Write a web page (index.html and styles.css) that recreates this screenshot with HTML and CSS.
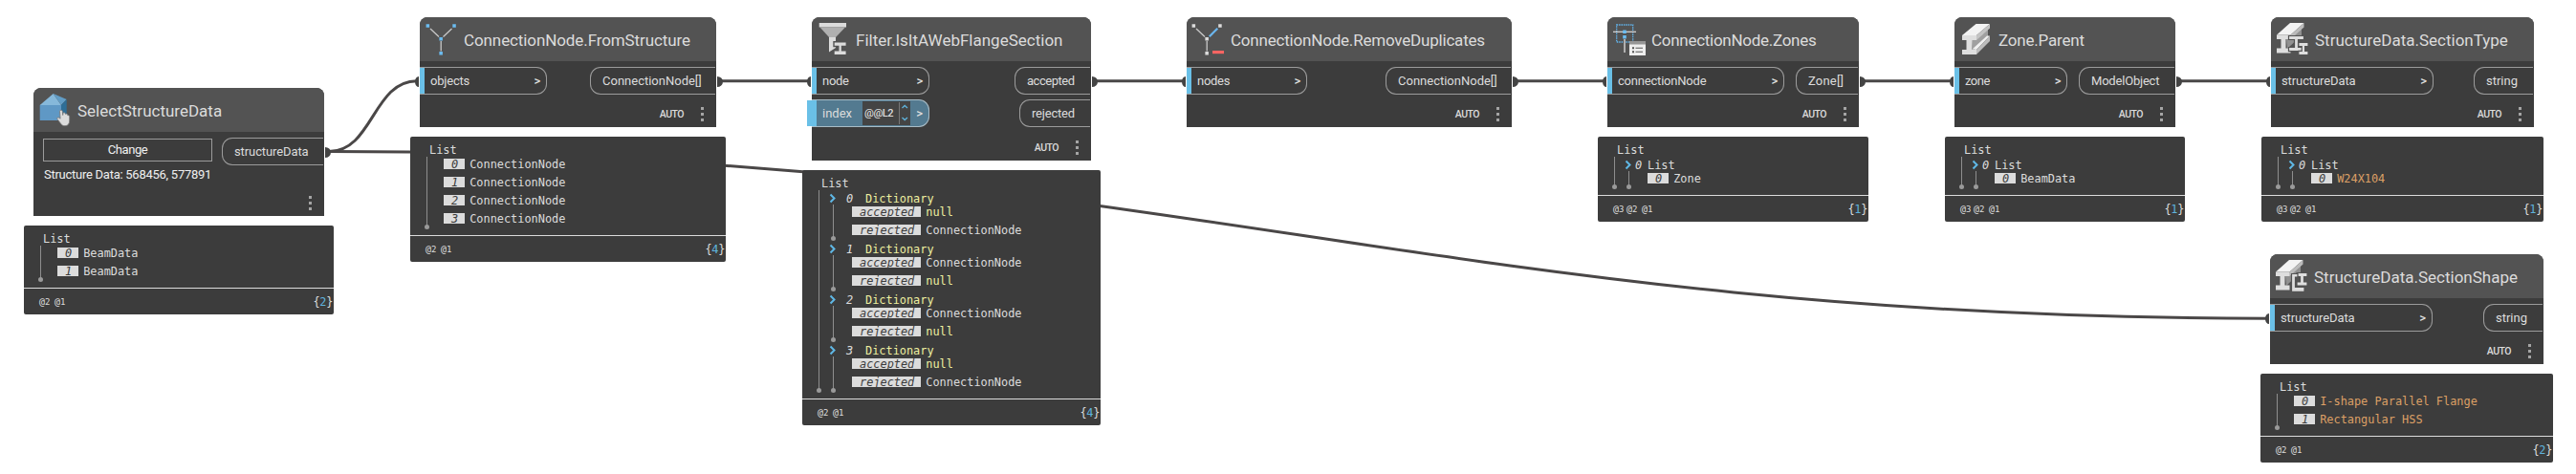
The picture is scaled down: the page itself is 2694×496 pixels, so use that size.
FILE: index.html
```html
<!DOCTYPE html>
<html lang="en">
<head>
<meta charset="utf-8">
<title>Graph</title>
<link rel="stylesheet" href="styles.css">
</head>
<body>
<main class="canvas">
<svg class="wires" width="2694" height="496" viewBox="0 0 2694 496">
  <g class="wire">
    <path d="M344 158.5C390 158.5 390 84.7 436 84.7"/>
    <path d="M344 158.5C1204 158.5 1512 333.2 2372 333.2"/>
    <path d="M752 84.7H846M1144 84.7H1238M1584 84.7H1678M1948 84.7H2042M2278 84.7H2373"/>
  </g>
  <g class="plug">
    <path d="M340 154a6 5.5 0 0 1 0 11zM750 80a6 5.5 0 0 1 0 11zM1142 80a6 5.5 0 0 1 0 11zM1582 80a6 5.5 0 0 1 0 11zM1945 80a6 5.5 0 0 1 0 11zM2276 80a6 5.5 0 0 1 0 11z"/>
    <path d="M438 80a4 5.5 0 0 0 0 11zM848 80a4 5.5 0 0 0 0 11zM1240 80a4 5.5 0 0 0 0 11zM1680 80a4 5.5 0 0 0 0 11zM2043 80a4 5.5 0 0 0 0 11zM2374 80a4 5.5 0 0 0 0 11zM2373 328a4 5.5 0 0 0 0 11z"/>
  </g>
</svg>

<section class="node select">
  <header class="head">
    <svg class="icon" viewBox="0 0 46 46">
      <path fill="#86b8da" d="M6.7 18 20.7 6 29 18z"/><path fill="#629dc6" d="M20.7 6 34.7 12 29 18z"/>
      <path fill="#5f98c5" d="M6.7 18H29V34H6.7z"/><path fill="#2e6e97" d="M29 18 34.7 12V30L29 34z"/>
      <path fill="#dcdcdc" stroke="#777" stroke-width=".8" d="M27.5 24.5c0-1.7 2.6-1.7 2.8 0l.4 4 .3-2c.6-1.2 2-.9 2.2.2l.4.8c.6-.8 1.8-.5 2 .6l.3.7c.9-.5 1.8.2 1.8 1.2v4c0 3.300-1.500 5.700-4.700 5.700-2.300 0-3.600-1-4.700-2.700l-3.300-4.300c-.8-1.300.7-2.300 1.800-1.500l1.300 1z"/>
    </svg>
    <h2 class="title">SelectStructureData</h2>
  </header>
  <div class="body">
    <div class="picker">
      <div class="change">Change</div>
      <div class="picked">Structure Data: 568456, 577891</div>
    </div>
    <div class="port out w106 ls1">structureData</div>
  </div>
  <footer class="foot"><i class="dots"></i></footer>
</section>
<section class="preview select-p">
  <div class="tree">
    <div class="root">List</div>
    <div class="branch">
      <div class="item"><span class="key">0</span>BeamData</div>
      <div class="item"><span class="key">1</span>BeamData</div>
    </div>
  </div>
  <div class="sum"><span class="lv">@<small>2</small></span><span class="lv">@<small>1</small></span><span class="count">{<b>2</b>}</span></div>
</section>

<section class="node from">
  <header class="head">
    <svg class="icon" viewBox="0 0 46 46">
      <path stroke="#c8c8c8" stroke-width="1.300" fill="none" d="M11 12 20 20.500M33.500 12 24.500 20.500M22.200 25V35.500"/>
      <path fill="#6bbcf0" d="M6.600 7.300h3.500v3.500H6.600zM34.300 7.300h3.500v3.500h-3.500zM20.400 21h3.500v3.500h-3.500zM20.400 36h3.500v3.500h-3.500z"/>
    </svg>
    <h2 class="title ls1">ConnectionNode.FromStructure</h2>
  </header>
  <div class="body">
    <div class="ins"><div class="port in w133 ls2">objects<i class="more">&gt;</i></div></div>
    <div class="outs"><div class="port out w131">ConnectionNode[]</div></div>
  </div>
  <footer class="foot">AUTO<i class="dots"></i></footer>
</section>
<section class="preview from-p">
  <div class="tree">
    <div class="root">List</div>
    <div class="branch">
      <div class="item"><span class="key">0</span>ConnectionNode</div>
      <div class="item"><span class="key">1</span>ConnectionNode</div>
      <div class="item"><span class="key">2</span>ConnectionNode</div>
      <div class="item"><span class="key">3</span>ConnectionNode</div>
    </div>
  </div>
  <div class="sum"><span class="lv">@<small>2</small></span><span class="lv">@<small>1</small></span><span class="count">{<b>4</b>}</span></div>
</section>

<section class="node filter">
  <header class="head">
    <svg class="icon" viewBox="0 0 46 46">
      <path fill="#dcdcdc" d="M7.700 6H36v4.500H7.700z"/><path fill="#b0b0b0" d="M8.500 10.500H35L25 21h-7z"/>
      <path fill="#dcdcdc" d="M18 21h7v11l-7 4.500z"/>
      <path fill="#dcdcdc" stroke="#535353" stroke-width="1.400" d="M23 25.800H36.300V30.500H31.500V34.700H36.300V39.600H23V34.700H27.800V30.500H23z"/>
    </svg>
    <h2 class="title">Filter.IsItAWebFlangeSection</h2>
  </header>
  <div class="body">
    <div class="ins">
      <div class="port in w123 ls3">node<i class="more">&gt;</i></div>
      <div class="port in w123 lacing">index
        <div class="level"><span>@@L2</span><svg width="12" height="25" viewBox="0 0 12 25"><path d="M.5 1V24" stroke="#777"/><path d="M3.500 7 6.200 4.500 9 7M3.500 17 6.200 19.500 9 17" fill="none" stroke="#5fb3dc" stroke-width="1.300"/></svg></div>
        <i class="more">&gt;</i></div>
    </div>
    <div class="outs"><div class="port out w79 ls4">accepted</div><div class="port out w74 ls2">rejected</div></div>
  </div>
  <footer class="foot">AUTO<i class="dots"></i></footer>
</section>
<section class="preview filter-p">
  <div class="tree">
    <div class="root">List</div>
    <div class="branch">
      <div class="sub dict"><svg class="chev" viewBox="0 0 8 11"><path d="M1.500 1.500 5.500 5.500 1.500 9.500"/></svg><em>0</em>Dictionary</div>
      <div class="branch nested">
        <div class="item"><span class="key">accepted</span><span class="null">null</span></div>
        <div class="item"><span class="key">rejected</span>ConnectionNode</div>
      </div>
      <div class="sub dict"><svg class="chev" viewBox="0 0 8 11"><path d="M1.500 1.500 5.500 5.500 1.500 9.500"/></svg><em>1</em>Dictionary</div>
      <div class="branch nested">
        <div class="item"><span class="key">accepted</span>ConnectionNode</div>
        <div class="item"><span class="key">rejected</span><span class="null">null</span></div>
      </div>
      <div class="sub dict"><svg class="chev" viewBox="0 0 8 11"><path d="M1.500 1.500 5.500 5.500 1.500 9.500"/></svg><em>2</em>Dictionary</div>
      <div class="branch nested">
        <div class="item"><span class="key">accepted</span>ConnectionNode</div>
        <div class="item"><span class="key">rejected</span><span class="null">null</span></div>
      </div>
      <div class="sub dict"><svg class="chev" viewBox="0 0 8 11"><path d="M1.500 1.500 5.500 5.500 1.500 9.500"/></svg><em>3</em>Dictionary</div>
      <div class="branch nested">
        <div class="item"><span class="key">accepted</span><span class="null">null</span></div>
        <div class="item"><span class="key">rejected</span>ConnectionNode</div>
      </div>
    </div>
  </div>
  <div class="sum"><span class="lv">@<small>2</small></span><span class="lv">@<small>1</small></span><span class="count">{<b>4</b>}</span></div>
</section>

<section class="node dedupe">
  <header class="head">
    <svg class="icon" viewBox="0 0 46 46">
      <path stroke="#c8c8c8" stroke-width="1.300" fill="none" d="M10 12 19 20.500M21.200 25V35.500"/>
      <path stroke="#6bb6ee" stroke-width="2.200" d="M32.300 11.700 23.800 20.300"/>
      <path fill="#dcdcdc" d="M5.600 7.300h3.500v3.500H5.600zM33.200 7.300h3.500v3.500h-3.500zM19.400 21h3.500v3.500h-3.500zM19.400 36h3.500v3.500h-3.500z"/>
      <path fill="#fb6562" d="M27 35h12v3.200H27z"/>
    </svg>
    <h2 class="title ls2">ConnectionNode.RemoveDuplicates</h2>
  </header>
  <div class="body">
    <div class="ins"><div class="port in w126 ls3">nodes<i class="more">&gt;</i></div></div>
    <div class="outs"><div class="port out w131">ConnectionNode[]</div></div>
  </div>
  <footer class="foot">AUTO<i class="dots"></i></footer>
</section>

<section class="node zones">
  <header class="head">
    <svg class="icon" viewBox="0 0 46 46">
      <path fill="none" stroke="#62b5ee" stroke-width="1.300" stroke-dasharray="1.500 .9" d="M9.700 8H26.700V26H9.700z"/>
      <path stroke="#dcdcdc" stroke-width="1.200" d="M6 15.300H30"/><path stroke="#b0b0b0" stroke-width="2" d="M18 23V37"/>
      <path fill="#6bbcf0" d="M16.200 13.500h3.600v3.600h-3.600zM16.200 19h3.600v3.400h-3.600z"/>
      <path fill="#eee" d="M23 25H40V40H23z"/><path fill="#969696" d="M23 25H40V28.500H23z"/>
      <path fill="#555" d="M26 31.300h2v2h-2zM26 35.300h2v2h-2zM29.500 31.800H37v1H29.500zM29.500 35.800H37v1H29.500z"/>
    </svg>
    <h2 class="title ls3">ConnectionNode.Zones</h2>
  </header>
  <div class="body">
    <div class="ins"><div class="port in w185 ls2">connectionNode<i class="more">&gt;</i></div></div>
    <div class="outs"><div class="port out w65 wide">Zone[]</div></div>
  </div>
  <footer class="foot">AUTO<i class="dots"></i></footer>
</section>
<section class="preview zones-p">
  <div class="tree">
    <div class="root">List</div>
    <div class="branch">
      <div class="sub"><svg class="chev" viewBox="0 0 8 11"><path d="M1.500 1.500 5.500 5.500 1.500 9.500"/></svg><em>0</em>List</div>
      <div class="branch nested"><div class="item"><span class="key">0</span>Zone</div></div>
    </div>
  </div>
  <div class="sum"><span class="lv near">@<small>3</small></span><span class="lv">@<small>2</small></span><span class="lv">@<small>1</small></span><span class="count">{<b>1</b>}</span></div>
</section>

<section class="node parent">
  <header class="head">
    <svg class="icon" viewBox="0 0 46 46">
      <path fill="#a0a0a0" d="M18 24 35 11V20L19 34z"/>
      <path fill="#f3f3f3" d="M8 19 22.500 7H37L23 19z"/><path fill="#c4c4c4" d="M23 19 37 7V11.500L23 24z"/>
      <path fill="#f0f0f0" d="M18.500 33.500 34 19.500H37L23 34z"/><path fill="#bdbdbd" d="M23 34 37 19.500V25L23 39z"/>
      <path fill="#dedede" d="M8 19H23V24H18.500V34H23V39H8V34H12.500V24H8z"/>
    </svg>
    <h2 class="title ls2">Zone.Parent</h2>
  </header>
  <div class="body">
    <div class="ins"><div class="port in w118 ls4">zone<i class="more">&gt;</i></div></div>
    <div class="outs"><div class="port out w100 ls2">ModelObject</div></div>
  </div>
  <footer class="foot">AUTO<i class="dots"></i></footer>
</section>
<section class="preview parent-p">
  <div class="tree">
    <div class="root">List</div>
    <div class="branch">
      <div class="sub"><svg class="chev" viewBox="0 0 8 11"><path d="M1.500 1.500 5.500 5.500 1.500 9.500"/></svg><em>0</em>List</div>
      <div class="branch nested"><div class="item"><span class="key">0</span>BeamData</div></div>
    </div>
  </div>
  <div class="sum"><span class="lv near">@<small>3</small></span><span class="lv">@<small>2</small></span><span class="lv">@<small>1</small></span><span class="count">{<b>1</b>}</span></div>
</section>

<section class="node type">
  <header class="head">
    <svg class="icon" viewBox="0 0 46 46">
      <path fill="#909090" d="M16 23 32 10V19L17 33z"/>
      <path fill="#f3f3f3" d="M6 18.500 20 6H34.500L20.500 18.500z"/><path fill="#bbb" d="M20.500 18.500 34.500 6V10.500L20.500 23z"/>
      <path fill="#dedede" d="M6 18.500H20.500V23H15.500V32.500H20.500V37.500H6V32.500H10.500V23H6z"/>
      <path fill="#dedede" stroke="#535353" stroke-width="1.200" d="M18.500 19.500H34.500V23.500H28.500V31.500H34.500V35.600H18.500V31.500H24.500V23.500H18.500z"/>
      <path fill="#dedede" stroke="#535353" stroke-width="1.200" d="M28.800 26.500H39V30.700H35.600V35.300H39V39.500H28.800V35.300H32.200V30.700H28.800z"/>
    </svg>
    <h2 class="title">StructureData.SectionType</h2>
  </header>
  <div class="body">
    <div class="ins"><div class="port in w170 ls1">structureData<i class="more">&gt;</i></div></div>
    <div class="outs"><div class="port out w62">string</div></div>
  </div>
  <footer class="foot">AUTO<i class="dots"></i></footer>
</section>
<section class="preview type-p">
  <div class="tree">
    <div class="root">List</div>
    <div class="branch">
      <div class="sub"><svg class="chev" viewBox="0 0 8 11"><path d="M1.500 1.500 5.500 5.500 1.500 9.500"/></svg><em>0</em>List</div>
      <div class="branch nested"><div class="item"><span class="key">0</span><span class="str">W24X104</span></div></div>
    </div>
  </div>
  <div class="sum"><span class="lv near">@<small>3</small></span><span class="lv">@<small>2</small></span><span class="lv">@<small>1</small></span><span class="count">{<b>1</b>}</span></div>
</section>

<section class="node shape">
  <header class="head">
    <svg class="icon" viewBox="0 0 46 46">
      <path fill="#909090" d="M16 23 32 10V19L17 33z"/>
      <path fill="#f3f3f3" d="M6 18.500 20 6H34.500L20.500 18.500z"/><path fill="#bbb" d="M20.500 18.500 34.500 6V10.500L20.500 23z"/>
      <path fill="#dedede" d="M6 18.500H20.500V23H15.500V32.500H20.500V37.500H6V32.500H10.500V23H6z"/>
      <path fill="#dedede" stroke="#535353" stroke-width="1.200" d="M28 19.500H39V23.500H35.500V29H39V33H28V29H31.500V23.500H28z"/>
      <path fill="#dedede" stroke="#535353" stroke-width="1.200" d="M22.500 20.500H29V24H26.500V34.500H36V39.300H22.500z"/>
    </svg>
    <h2 class="title">StructureData.SectionShape</h2>
  </header>
  <div class="body">
    <div class="ins"><div class="port in w170 ls1">structureData<i class="more">&gt;</i></div></div>
    <div class="outs"><div class="port out w62">string</div></div>
  </div>
  <footer class="foot">AUTO<i class="dots"></i></footer>
</section>
<section class="preview shape-p">
  <div class="tree">
    <div class="root">List</div>
    <div class="branch">
      <div class="item"><span class="key">0</span><span class="str">I-shape Parallel Flange</span></div>
      <div class="item"><span class="key">1</span><span class="str">Rectangular HSS</span></div>
    </div>
  </div>
  <div class="sum"><span class="lv">@<small>2</small></span><span class="lv">@<small>1</small></span><span class="count">{<b>2</b>}</span></div>
</section>
</main>
</body>
</html>
```
FILE: styles.css
```css
* { box-sizing: border-box; }
body { margin: 0; background: #fff; }
.canvas { position: relative; width: 2694px; height: 496px; overflow: hidden; font-family: Roboto, sans-serif; color: #dcdcdc; }
.wires { position: absolute; left: 0; top: 0; }
.wire { fill: none; stroke: #4a4747; stroke-width: 3; }
.plug { fill: #444; }

/* nodes and previews are placed freely on the graph canvas */
.node, .preview { position: absolute; background: #3c3c3c; white-space: nowrap; }
.node { display: flex; flex-direction: column; border-radius: 8px 8px 0 0; }
.preview { display: flex; flex-direction: column; border-radius: 2px; font: 11.9px/14px "DejaVu Sans Mono", monospace; }
.select { left: 35px; top: 92px; width: 304px; height: 134px; }
.select-p { left: 25px; top: 236px; width: 324px; }
.from { left: 439px; top: 18px; width: 310px; height: 115px; }
.from-p { left: 429px; top: 143px; width: 330px; }
.filter { left: 849px; top: 18px; width: 292px; height: 150px; }
.filter-p { left: 839px; top: 178px; width: 312px; }
.dedupe { left: 1241px; top: 18px; width: 340px; height: 115px; }
.zones { left: 1681px; top: 18px; width: 263px; height: 115px; }
.zones-p { left: 1671px; top: 143px; width: 283px; }
.parent { left: 2044px; top: 18px; width: 231px; height: 115px; }
.parent-p { left: 2034px; top: 143px; width: 251px; }
.type { left: 2375px; top: 18px; width: 275px; height: 115px; }
.type-p { left: 2365px; top: 143px; width: 295px; }
.shape { left: 2374px; top: 266px; width: 286px; height: 115px; }
.shape-p { left: 2364px; top: 391px; width: 306px; }

.head { display: flex; height: 46px; background: #535353; border-radius: 8px 8px 0 0; }
.icon { width: 46px; height: 46px; flex: none; }
.title { margin: 0; font-size: 17px; font-weight: 400; line-height: 48px; }
.ls1 { letter-spacing: -.1px; }
.ls2 { letter-spacing: -.2px; }
.ls3 { letter-spacing: -.28px; }
.ls4 { letter-spacing: -.48px; }
.wide { letter-spacing: .2px; }

.body { display: flex; justify-content: space-between; align-items: flex-start; padding: 6px 1px 0 0; }
.ins, .outs { display: flex; flex-direction: column; gap: 5px; }
.outs { align-items: flex-end; }
.port { display: flex; align-items: center; height: 29px; border: 1px solid #9b9b9b; font-size: 13px; }
.in { position: relative; border-left: 0; border-radius: 0 11px 11px 0; padding: 0 6px 0 11px; }
.in::before { content: ""; position: absolute; left: 0; top: 0; width: 5px; height: 27px; background: #6ac0e7; }
.out { border-right: 0; border-radius: 11px 0 0 11px; padding-left: 12px; }
.more { margin-left: auto; font-style: normal; font-weight: 500; }
.w62 { width: 62px; }
.w65 { width: 65px; }
.w74 { width: 74px; }
.w79 { width: 79px; }
.w100 { width: 100px; }
.w106 { width: 106px; }
.w118 { width: 118px; }
.w123 { width: 123px; }
.w126 { width: 126px; }
.w131 { width: 131px; }
.w133 { width: 133px; }
.w170 { width: 170px; }
.w185 { width: 185px; }
.lacing { background: #537a90; border-color: #a9bcc6; }
.lacing::before { left: -5px; width: 10px; }
.level { position: absolute; left: 53px; top: 1px; width: 50px; height: 25px; display: flex; justify-content: space-between; background: #444; font-size: 11px; line-height: 25px; letter-spacing: -.45px; padding-left: 2px; font-weight: 500; }
.foot { display: flex; justify-content: flex-end; align-items: center; margin-top: auto; height: 28px; padding-right: 13px; font-size: 10.5px; font-weight: 500; letter-spacing: -.5px; }
.dots { width: 3px; height: 3px; margin-left: 18px; background: #a5a5a5; box-shadow: 0 -6px #a5a5a5, 0 6px #a5a5a5; }

.picker { width: 177px; margin: 1px 0 0 10px; font-size: 13px; color: #f0f0f0; }
.change { height: 24px; border: 1px solid #9b9b9b; text-align: center; line-height: 22px; letter-spacing: -.45px; }
.picked { margin-top: 6px; padding-left: 1px; line-height: 16px; letter-spacing: -.26px; }

.tree { padding: 7px 0 4px 17px; border-bottom: 1px solid #dcdcdc; }
.root { height: 16px; padding-left: 3px; }
.branch { position: relative; }
.branch::before { content: ""; position: absolute; left: 0; top: -2px; bottom: 4px; width: 1px; background: #8e8e8e; }
.branch::after { content: ""; position: absolute; left: -2px; bottom: 2px; width: 5px; height: 5px; border-radius: 50%; background: #9a9a9a; }
.item { display: flex; height: 19px; padding-left: 18px; line-height: 12px; }
.key { height: 11px; line-height: 12px; margin-right: 5px; padding: 0 7px 0 8px; background: #dcdcdc; color: #3c3c3c; font-style: italic; }
.nested { margin-left: 15px; }
.nested .item { padding-left: 20px; }
.sub { display: flex; height: 15px; padding-left: 11px; line-height: 14px; }
.sub em { flex: none; width: 16px; padding-left: 3px; }
.dict { color: #eeefa0; }
.sub.dict em { width: 30px; padding-left: 10px; color: #dcdcdc; }
.chev { flex: none; width: 8px; height: 11px; margin-top: 1px; fill: none; stroke: #5fb8e6; stroke-width: 2; }
.null { color: #eeefa0; }
.str { color: #dda066; }
.sum { display: flex; align-items: center; height: 27px; padding: 0 1px 0 16px; }
.lv { flex: none; width: 12px; margin-right: 4px; font-size: 10px; }
.lv small { font-size: 9px; }
.near { margin-right: 2px; }
.count { margin-left: auto; letter-spacing: -.3px; }
.count b { color: #5fb3dc; font-weight: 400; }
```
